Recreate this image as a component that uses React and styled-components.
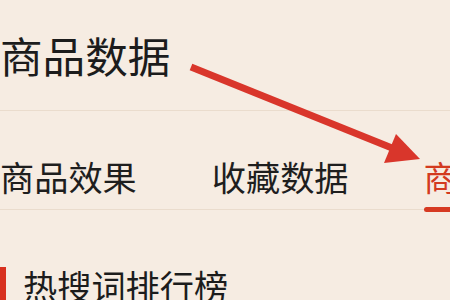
import React from 'react'
import styled, { createGlobalStyle } from 'styled-components'

const GlobalStyle = createGlobalStyle`
  html, body {
    margin: 0;
    padding: 0;
    background: #f6ece2;
  }
  body {
    font-family: "Noto Sans CJK SC", "Noto Sans", sans-serif;
    color: #1c1c1c;
    overflow: hidden;
  }
`

const Page = styled.div`
  position: relative;
  width: 450px;
  height: 300px;
  overflow: hidden;
`

const Header = styled.div`
  padding: 34px 0 34px 0;
  border-bottom: 1px solid #eadccd;
`

const Title = styled.h1`
  margin: 0;
  font-size: 42.6px;
  line-height: 42px;
  font-weight: 400;
  white-space: nowrap;
`

const TabBar = styled.div`
  display: flex;
  gap: 75px;
  padding: 49px 0 16px 0;
  border-bottom: 1px solid #eadccd;
  white-space: nowrap;
`

const Tab = styled.div`
  position: relative;
  font-size: 34.2px;
  line-height: 33px;
  color: ${(p) => (p.$active ? '#d33a1f' : '#1e1e1e')};

  &::after {
    content: '';
    display: ${(p) => (p.$active ? 'block' : 'none')};
    position: absolute;
    left: 0;
    right: 0;
    bottom: -19px;
    height: 5px;
    border-radius: 3px;
    background: #d63a22;
  }
`

const Section = styled.div`
  display: flex;
  align-items: center;
  gap: 17px;
  margin-top: 57px;
`

const Marker = styled.span`
  width: 6px;
  height: 36px;
  background: #d8311f;
`

const SectionTitle = styled.h2`
  margin: 0;
  font-size: 34.2px;
  line-height: 36px;
  font-weight: 400;
  white-space: nowrap;
`

const Arrow = styled.svg`
  position: absolute;
  left: 0;
  top: 0;
  pointer-events: none;
`

const tabs = ['商品效果', '收藏数据', '商品排行']

export default function App() {
  return (
    <Page>
      <GlobalStyle />
      <Header>
        <Title>商品数据</Title>
      </Header>
      <TabBar>
        {tabs.map((t, i) => (
          <Tab key={t} $active={i === 2}>
            {t}
          </Tab>
        ))}
      </TabBar>
      <Section>
        <Marker />
        <SectionTitle>热搜词排行榜</SectionTitle>
      </Section>
      <Arrow width="450" height="300" viewBox="0 0 450 300">
        <line x1="191" y1="67" x2="392" y2="148" stroke="#d9362b" strokeWidth="7" />
        <polygon points="396,134 384,163 420,159" fill="#d9362b" />
      </Arrow>
    </Page>
  )
}
